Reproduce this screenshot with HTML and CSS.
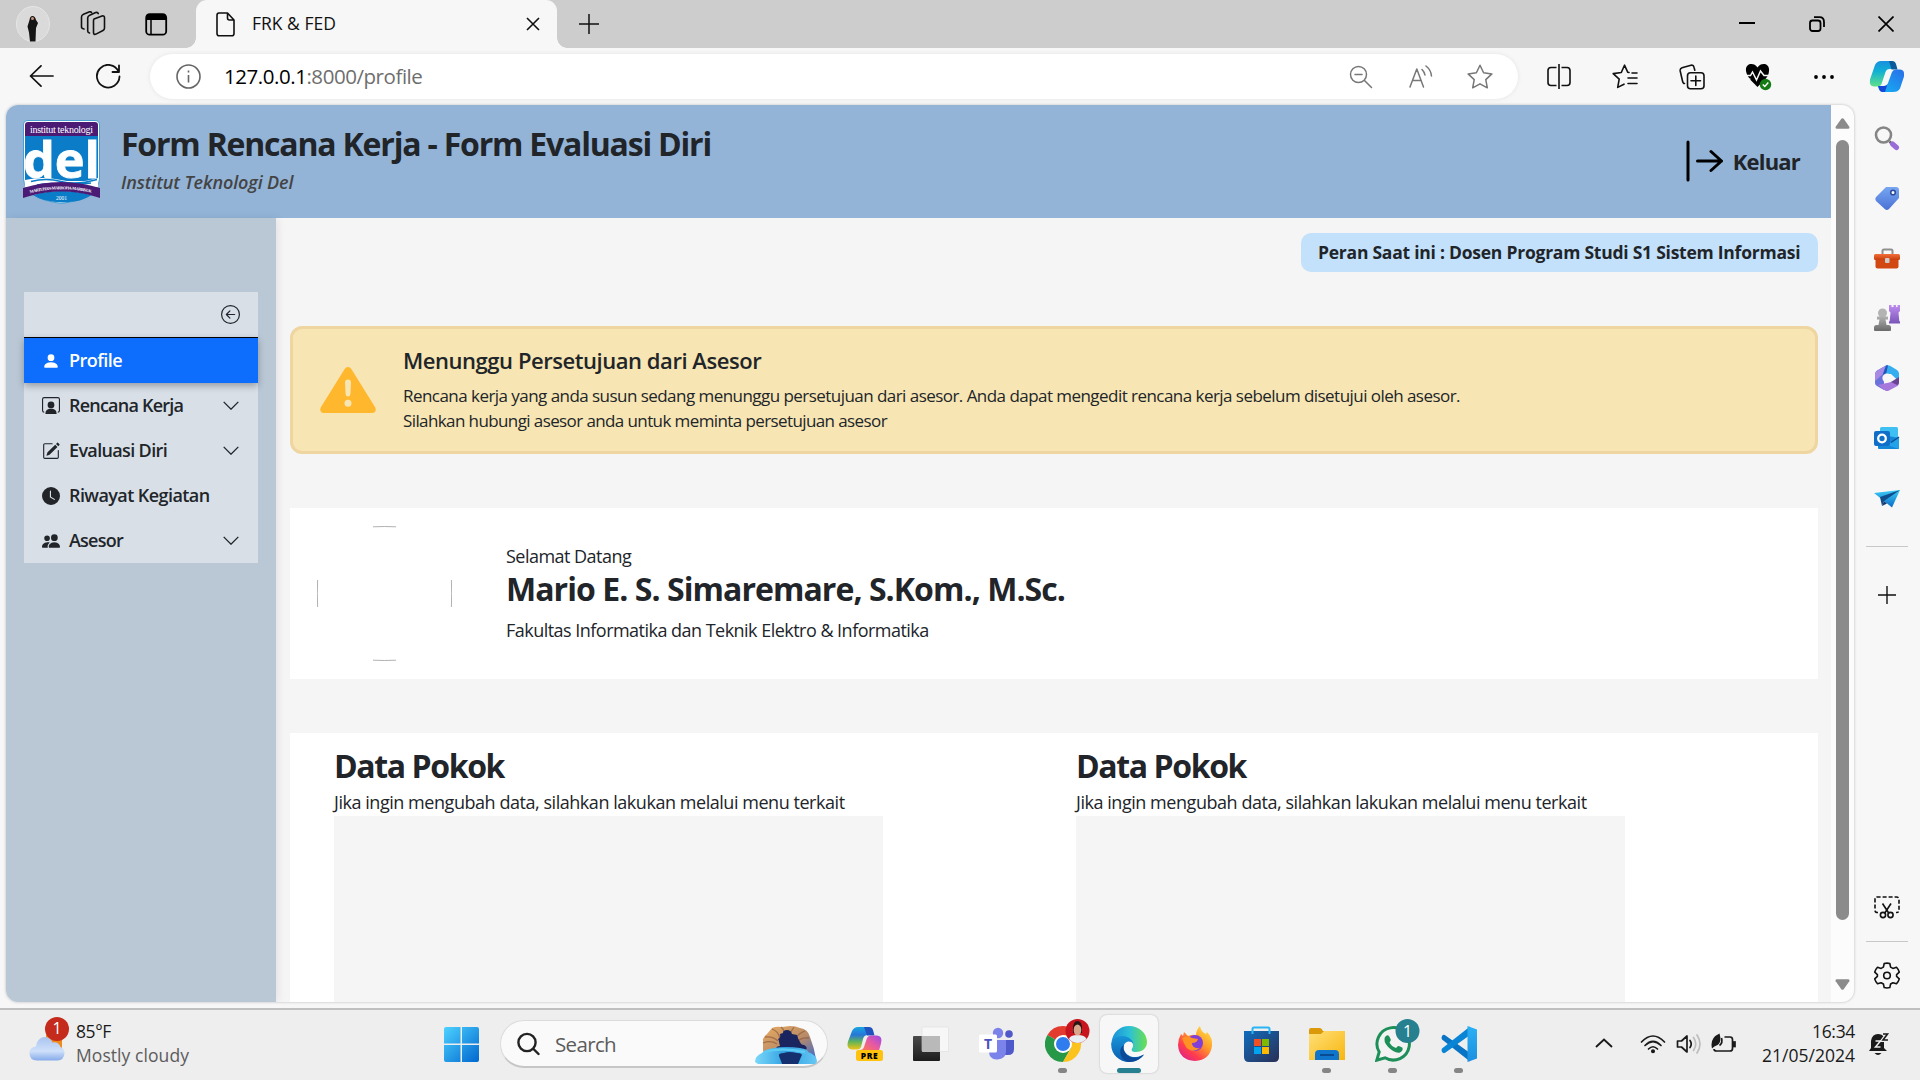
FILE: index.html
```html
<!DOCTYPE html>
<html lang="id">
<head>
<meta charset="utf-8">
<title>FRK &amp; FED</title>
<link rel="stylesheet" href="styles.css">
</head>
<body>
<svg class="defs" width="0" height="0" aria-hidden="true">
  <defs>
    <linearGradient id="gWin" x1="0" y1="0" x2="1" y2="1"><stop offset="0" stop-color="#4dd2ff"/><stop offset="1" stop-color="#0067cf"/></linearGradient>
    <linearGradient id="gCopA" x1="0" y1="0" x2="0" y2="1"><stop offset="0" stop-color="#1a8fe0"/><stop offset=".4" stop-color="#10b0d4"/><stop offset="1" stop-color="#5fe08a"/></linearGradient>
    <linearGradient id="gCopB" x1="0" y1="1" x2="1" y2="0"><stop offset="0" stop-color="#12b5f5"/><stop offset="1" stop-color="#2a6ee8"/></linearGradient>
    <linearGradient id="gPreA" x1="0" y1="0" x2="0" y2="1"><stop offset="0" stop-color="#19a5e0"/><stop offset=".35" stop-color="#2776d8"/><stop offset=".65" stop-color="#5fb35c"/><stop offset="1" stop-color="#f0c514"/></linearGradient>
    <linearGradient id="gPreB" x1="1" y1="0" x2="0" y2="1"><stop offset="0" stop-color="#9a4be8"/><stop offset=".5" stop-color="#e85aa0"/><stop offset="1" stop-color="#ff7a45"/></linearGradient>
    <linearGradient id="gTag" x1="0" y1="0" x2="0" y2="1"><stop offset="0" stop-color="#78a6f0"/><stop offset="1" stop-color="#4a72d6"/></linearGradient>
    <linearGradient id="gPurple" x1="0" y1="0" x2="0" y2="1"><stop offset="0" stop-color="#bf8df0"/><stop offset="1" stop-color="#7a55b8"/></linearGradient>
    <linearGradient id="gGray" x1="0" y1="0" x2="0" y2="1"><stop offset="0" stop-color="#b0b0b0"/><stop offset="1" stop-color="#6a6a6a"/></linearGradient>
    <linearGradient id="gBox" x1="0" y1="0" x2="0" y2="1"><stop offset="0" stop-color="#f0703a"/><stop offset="1" stop-color="#c83c0c"/></linearGradient>
    <linearGradient id="gPlane" x1="0" y1="0" x2="0" y2="1"><stop offset="0" stop-color="#3ccbf5"/><stop offset="1" stop-color="#0a6cc8"/></linearGradient>
    <linearGradient id="gEdgeTop" x1="0" y1="0" x2="1" y2="0"><stop offset="0" stop-color="#1a8fd8"/><stop offset=".5" stop-color="#2cc0d8"/><stop offset="1" stop-color="#6be04e"/></linearGradient>
    <linearGradient id="gEdgeLow" x1="0" y1="0" x2="0" y2="1"><stop offset="0" stop-color="#1794d8"/><stop offset="1" stop-color="#0c5cb0"/></linearGradient>
    <linearGradient id="gFox" x1="1" y1="0" x2=".2" y2="1"><stop offset="0" stop-color="#fff04a"/><stop offset=".45" stop-color="#ff9a2a"/><stop offset=".75" stop-color="#ff3d4d"/><stop offset="1" stop-color="#e0208c"/></linearGradient>
    <linearGradient id="gStore" x1="0" y1="0" x2="1" y2="1"><stop offset="0" stop-color="#0f6cbd"/><stop offset="1" stop-color="#2a2f55"/></linearGradient>
    <linearGradient id="gFolder" x1="0" y1="0" x2="1" y2="1"><stop offset="0" stop-color="#ffe07a"/><stop offset="1" stop-color="#f8b60e"/></linearGradient>
    <linearGradient id="gCloud" x1="0" y1="0" x2="0" y2="1"><stop offset="0" stop-color="#a9c4f0"/><stop offset=".6" stop-color="#cfe0fa"/><stop offset="1" stop-color="#86abea"/></linearGradient>
    <linearGradient id="gCode" x1="0" y1="0" x2="0" y2="1"><stop offset="0" stop-color="#2bb0f4"/><stop offset="1" stop-color="#1a8fe0"/></linearGradient>
    <linearGradient id="gDark" x1="0" y1="0" x2="0" y2="1"><stop offset="0" stop-color="#4a4a4a"/><stop offset="1" stop-color="#1c1c1c"/></linearGradient>
    <linearGradient id="gRock" x1="0" y1="0" x2="1" y2="1"><stop offset="0" stop-color="#e8ac60"/><stop offset=".55" stop-color="#b98a68"/><stop offset="1" stop-color="#3a6bd0"/></linearGradient>
    <linearGradient id="gSea" x1="0" y1="0" x2="1" y2="0"><stop offset="0" stop-color="#7ad8fa"/><stop offset=".5" stop-color="#2f9fe0"/><stop offset="1" stop-color="#66c8f5"/></linearGradient>
  </defs>
</svg>

<div class="tabbar">
  <div class="tabbar-tools">
    <svg width="34" height="36" viewBox="0 0 34 36"><ellipse cx="17" cy="18" rx="16.500" ry="17.500" fill="#dadada" stroke="#e6e6e6"/><path d="M13.500 14q.5-4 3-4t3.500 4l2 3-2 5-.5 13.500h-5.500l-1-9-1.500-6z" fill="#141414"/><circle cx="16.500" cy="12.500" r="1.500" fill="#c49478"/></svg>
    <svg width="26" height="26" viewBox="0 0 26 26" fill="none" stroke="#111" stroke-width="1.600" stroke-linejoin="round" stroke-linecap="round"><path d="M14 8l8-3q2.500-.5 2.500 1.800V17q0 1.800-1.500 2.500l-7 3.600q-2.500 1-2.500-1.500V10q0-1.500.5-2z"/><path d="M9.500 22q-1.800-.5-1.800-2V7q0-2 2-2.800l6-2.600q2-.6 2.500 1M4 18q-2.500-.5-2.500-2V6q0-2 2-2.800L9 .9q1.500-.5 2.500.5"/></svg>
    <svg width="23" height="23" viewBox="0 0 23 23"><rect x="1.200" y="1.200" width="20" height="20.500" rx="3.500" fill="none" stroke="#000" stroke-width="1.800"/><path d="M1 7V4q0-3 3-3h14q3 0 3 3v3z"/><path d="M6 7v14" stroke="#000" stroke-width="1.500"/></svg>
  </div>
  <div class="tab">
    <svg width="19" height="25" viewBox="0 0 19 25" fill="none" stroke="#111" stroke-width="1.600" stroke-linejoin="round"><path d="M3 1h8.500L18 8v13.500q0 2.300-2.200 2.300H3.200Q1 23.800 1 21.500V3.300Q1 1 3 1zM11.500 1v5q0 2 2 2H18"/></svg>
    <span class="tab-title">FRK &amp; FED</span>
    <svg class="tab-close" width="14" height="14" viewBox="0 0 14 14" stroke="#111" stroke-width="1.600"><path d="M1 1l12 12M13 1L1 13"/></svg>
  </div>
  <svg class="new-tab" width="22" height="22" viewBox="0 0 22 22" stroke="#111" stroke-width="1.500"><path d="M11 1v20M1 11h20"/></svg>
  <div class="window-controls">
    <svg width="16" height="16" viewBox="0 0 16 16" stroke="#000" stroke-width="2"><path d="M0 7h16"/></svg>
    <svg width="16" height="16" viewBox="0 0 16 16" fill="none" stroke="#000" stroke-width="1.800"><rect x="1" y="4.500" width="10.500" height="10.500" rx="2.500"/><path d="M5 1.200h5.500Q15 1.200 15 6v5"/></svg>
    <svg width="16" height="16" viewBox="0 0 16 16" stroke="#000" stroke-width="1.700"><path d="M.5.500l15 15M15.500.500l-15 15"/></svg>
  </div>
</div>

<div class="toolbar">
  <div class="nav-buttons">
    <svg width="25" height="24" viewBox="0 0 25 24" fill="none" stroke="#111" stroke-width="1.700" stroke-linecap="round" stroke-linejoin="round"><path d="M24 11H1.500M12 .8L1.500 11 12 21.200"/></svg>
    <svg width="26" height="26" viewBox="0 0 26 26" fill="none" stroke="#111" stroke-width="1.800" stroke-linecap="round" stroke-linejoin="round"><path d="M23.500 7.500A11.300 11.300 0 1 0 24.500 12.500M24 1.500V8h-6.500"/></svg>
  </div>
  <div class="address">
    <svg width="25" height="25" viewBox="0 0 25 25" fill="none" stroke="#666" stroke-width="1.600"><circle cx="12.500" cy="12.500" r="11.500"/><path d="M12.500 11v7.500M12.500 6.500v2"/></svg>
    <span class="url"><b>127.0.0.1</b>:8000/profile</span>
    <div class="address-icons">
      <svg width="24" height="24" viewBox="0 0 24 24" fill="none" stroke="#777" stroke-width="1.500" stroke-linecap="round"><circle cx="9.500" cy="9.500" r="8"/><path d="M15.500 15.500L22.500 22.500M6 9.500h7"/></svg>
      <svg width="25" height="24" viewBox="0 0 25 24" fill="none" stroke="#777" stroke-width="1.500" stroke-linecap="round" stroke-linejoin="round"><path d="M2 22L8.800 4 15.500 22M4.500 15.500h8.700M14 4.500q2.500 2.500 3 5.500M18 1q5 4 5.500 10"/></svg>
      <svg width="26" height="25" viewBox="0 0 26 25" fill="none" stroke="#777" stroke-width="1.500" stroke-linejoin="round"><path d="M13 1.200l3.600 7.600 8.300 1.100-6.100 5.700 1.500 8.200-7.300-4-7.300 4 1.500-8.200L1.100 9.900l8.300-1.100z"/></svg>
    </div>
  </div>
  <div class="toolbar-icons">
    <svg width="24" height="25" viewBox="0 0 24 25" fill="none" stroke="#111" stroke-width="1.600"><path d="M9.500 3.500H4q-3 0-3 3v12q0 3 3 3h5.500M14.500 3.500H20q3 0 3 3v12q0 3-3 3h-5.500M12 0v25"/></svg>
    <svg width="26" height="25" viewBox="0 0 26 25" fill="none" stroke="#111" stroke-width="1.600" stroke-linejoin="round" stroke-linecap="round"><path d="M17 8.500l-1.200-.2L12.500 1.200 9.300 8.500 1.200 9.600l6 5.600-1.500 8.200 6.300-3.200M20 9h5M16 14h9M16 19.500h9"/></svg>
    <svg width="26" height="26" viewBox="0 0 26 26" fill="none" stroke="#111" stroke-width="1.600" stroke-linejoin="round" stroke-linecap="round"><path d="M5.500 19.500Q4 19.500 3.500 17L1.200 7Q.8 4.500 3 3.800L12 1.200q2.500-.5 3 2l.8 3"/><rect x="8.500" y="8.800" width="16.500" height="16" rx="3"/><path d="M16.800 12v9.500M12 16.800h9.500"/></svg>
    <svg width="27" height="28" viewBox="0 0 27 28"><path d="M12.500 4.500C9-1 0 0 1 8c1 7 8 12 11.500 16C16 20 24 15 24 8 25 0 16-1 12.500 4.500z"/><path d="M0 12.500h5.500l2-3.500 4 8 4-9 3.500 4.500h7" fill="none" stroke="#f7f7f7" stroke-width="1.500"/><path d="M0 16h5.500" stroke="#f7f7f7" stroke-width="1"/><circle cx="20.500" cy="21.500" r="5.700" fill="#147a14"/><path d="M17.800 21.500l2 2 3.500-4" fill="none" stroke="#fff" stroke-width="1.400"/></svg>
    <svg width="22" height="6" viewBox="0 0 22 6"><circle cx="3" cy="3" r="1.900"/><circle cx="11" cy="3" r="1.900"/><circle cx="19" cy="3" r="1.900"/></svg>
    <svg width="36" height="33" viewBox="0 0 36 33"><path d="M12 1h10q3 0 4 3l1.500 5h-7q-3 0-4 3l-4 12q-1 2.500-4 2.500H5q-5 0-4-7L6 5q2-4 6-4z" fill="url(#gCopA)"/><path d="M20 1h3q3 0 4 3l1.500 5.500h-6z" fill="#0b5b9c"/><path d="M24 32H14q-3 0-4-3l-1-3h6q3 0 4-3l4-11q1-2.500 4-2.500h4q5 0 4 7l-4 12q-2 3.500-7 3.500z" fill="url(#gCopB)"/><path d="M9 26h6q3 0 3.500-2L16 32h-2q-3 0-4-3z" fill="#1548d6"/></svg>
  </div>
</div>

<div class="body-row">
  <div class="viewport">
    <div class="page">
      <header class="app-header">
        <svg class="logo" width="78" height="84" viewBox="0 0 78 84">
          <path d="M5 .5h67q4.500 0 4.500 4.500v54q-2 20-38 24.500Q2 79 .5 59V5Q.5.500 5 .5z" fill="#fff" stroke="#4a9fd0"/>
          <path d="M2 16h73v45H2z" fill="#0a7cc8"/>
          <path d="M5 2h67q3 0 3 3v11H2V5q0-3 3-3z" fill="#4a1a75"/>
          <text x="38.500" y="12.500" text-anchor="middle" textLength="63" font-family="Liberation Serif, serif" font-size="10" fill="#fff">institut teknologi</text>
          <text x="0" y="57.500" textLength="77" lengthAdjust="spacingAndGlyphs" font-family="Open Sans, sans-serif" font-weight="700" font-size="51" fill="#fff" stroke="#fff" stroke-width=".8">del</text>
          <path d="M2 60q18-4 36 0t37-2v9H2z" fill="#fff"/><path d="M8 61.500q15-4 30 0t36-2M14 65q12-2.500 24-1t30-1" fill="none" stroke="#0a7cc8" stroke-width="1.500"/>
          <path d="M10 75q28-8 58 0-8 7-29 7.500Q20 82 10 75z" fill="#0a7cc8"/>
          <path d="M0 68q38-12 77 0v10l-5-1.500q-33.500-10-67 0L0 78z" fill="#4a1a75"/>
          <path id="ribbon" d="M7 73.200q31.500-8 63 0" fill="none"/>
          <text font-family="Liberation Serif, serif" font-weight="700" font-size="4.200" fill="#fff"><textPath href="#ribbon" textLength="62">MARTUHAN-MARROHA-MARBISUK</textPath></text>
          <text x="38.500" y="79.500" text-anchor="middle" font-family="Liberation Serif, serif" font-size="5.500" fill="#fff">2001</text>
        </svg>
        <div class="brand">
          <h1>Form Rencana Kerja - Form Evaluasi Diri</h1>
          <p>Institut Teknologi Del</p>
        </div>
        <a class="logout">
          <svg width="37" height="42" viewBox="0 0 37 42" fill="none" stroke="#000" stroke-width="3" stroke-linecap="round" stroke-linejoin="round"><path d="M2 2v38M11.500 21h24M25 11.500L35.500 21 25 30.500"/></svg>
          <span>Keluar</span>
        </a>
      </header>
      <div class="columns">
        <aside class="side">
          <nav class="menu">
            <div class="menu-top"><svg width="19" height="19" viewBox="0 0 16 16" fill="#212529"><path fill-rule="evenodd" d="M1 8a7 7 0 1 0 14 0A7 7 0 0 0 1 8m15 0A8 8 0 1 1 0 8a8 8 0 0 1 16 0m-4.500-.5a.5.5 0 0 1 0 1H5.707l2.147 2.146a.5.5 0 0 1-.708.708l-3-3a.5.5 0 0 1 0-.708l3-3a.5.5 0 1 1 .708.708L5.707 7.500z"/></svg></div>
            <a class="item active"><svg class="ico" viewBox="0 0 16 16"><path d="M3 14s-1 0-1-1 1-4 6-4 6 3 6 4-1 1-1 1zm5-6a3 3 0 1 0 0-6 3 3 0 0 0 0 6"/></svg><span>Profile</span></a>
            <a class="item"><svg class="ico" viewBox="0 0 16 16"><path d="M11 7a3 3 0 1 1-6 0 3 3 0 0 1 6 0"/><path fill-rule="evenodd" d="M2 0a2 2 0 0 0-2 2v10a2 2 0 0 0 2 2V13a1 1 0 0 1-1-1V2a1 1 0 0 1 1-1h12a1 1 0 0 1 1 1v10a1 1 0 0 1-1 1v1a2 2 0 0 0 2-2V2a2 2 0 0 0-2-2z"/><path d="M3 15q0-4.500 5-4.500t5 4.500z"/></svg><span>Rencana Kerja</span><svg class="chev" viewBox="0 0 16 9"><path d="M.7.900L8 8.200 15.300.900"/></svg></a>
            <a class="item evaluasi"><svg class="ico" viewBox="0 0 16 16"><path d="M15.502 1.940a.5.5 0 0 1 0 .706L14.459 3.690l-2-2L13.502.646a.5.5 0 0 1 .707 0zm-1.750 2.456-2-2-6.813 6.813a.5.5 0 0 0-.121.196l-.805 2.414a.25.25 0 0 0 .316.316l2.414-.805a.5.5 0 0 0 .196-.12z"/><path fill-rule="evenodd" d="M1 13.500A1.500 1.500 0 0 0 2.500 15h11a1.500 1.500 0 0 0 1.500-1.500v-6a.5.5 0 0 0-1 0v6a.5.5 0 0 1-.5.500h-11a.5.5 0 0 1-.5-.5v-11a.5.5 0 0 1 .5-.5H9a.5.5 0 0 0 0-1H2.500A1.500 1.500 0 0 0 1 2.500z"/></svg><span>Evaluasi Diri</span><svg class="chev" viewBox="0 0 16 9"><path d="M.7.900L8 8.200 15.300.900"/></svg></a>
            <a class="item riwayat"><svg class="ico" viewBox="0 0 16 16"><path d="M16 8A8 8 0 1 1 0 8a8 8 0 0 1 16 0M8 3.500a.5.5 0 0 0-1 0V9a.5.5 0 0 0 .252.434l3.500 2a.5.5 0 0 0 .496-.868L8 8.710z"/></svg><span>Riwayat Kegiatan</span></a>
            <a class="item"><svg class="ico" viewBox="0 0 16 16"><path d="M7 14s-1 0-1-1 1-4 5-4 5 3 5 4-1 1-1 1zm4-6a3 3 0 1 0 0-6 3 3 0 0 0 0 6m-5.784 6A2.240 2.240 0 0 1 5 13c0-1.355.680-2.750 1.936-3.720A6.300 6.300 0 0 0 5 9c-4 0-5 3-5 4s1 1 1 1zM4.500 8a2.500 2.500 0 1 0 0-5 2.500 2.500 0 0 0 0 5"/></svg><span>Asesor</span><svg class="chev" viewBox="0 0 16 9"><path d="M.7.900L8 8.200 15.300.900"/></svg></a>
          </nav>
        </aside>
        <main class="content">
          <div class="role"><span>Peran Saat ini : Dosen Program Studi S1 Sistem Informasi</span></div>
          <section class="alert">
            <svg width="56" height="46" viewBox="0 0 56 46"><path d="M28 0q2.200 0 3.500 2.200L55.300 40.500Q57 45.500 52 46H4q-5-.5-3.300-5.500L24.500 2.200Q25.800 0 28 0z" fill="#ffb82e"/><path d="M25 15.500q0-3 3-3t3 3l-.6 11.500q-.2 2.600-2.400 2.600T25.600 27z" fill="#f7e5b3"/><circle cx="28" cy="36.300" r="3.500" fill="#f7e5b3"/></svg>
            <div class="alert-text">
              <h2>Menunggu Persetujuan dari Asesor</h2>
              <p>Rencana kerja yang anda susun sedang menunggu persetujuan dari asesor. Anda dapat mengedit rencana kerja sebelum disetujui oleh asesor.</p>
              <p class="last">Silahkan hubungi asesor anda untuk meminta persetujuan asesor</p>
            </div>
          </section>
          <section class="welcome">
            <svg class="photo" width="135" height="135" viewBox="0 0 135 135" stroke="#a8a8a8"><path d="M56 .8q11.500-.6 23 0M56 134.200q11.500.6 23 0M.6 54q-.5 13.500 0 27M134.400 54q.5 13.500 0 27" fill="none" stroke-width=".9"/></svg>
            <div class="welcome-text">
              <p>Selamat Datang</p>
              <h2>Mario E. S. Simaremare, S.Kom., M.Sc.</h2>
              <p>Fakultas Informatika dan Teknik Elektro &amp; Informatika</p>
            </div>
          </section>
          <section class="data">
            <div class="data-col"><h2>Data Pokok</h2><p>Jika ingin mengubah data, silahkan lakukan melalui menu terkait</p><div class="data-box"></div></div>
            <div class="data-col"><h2>Data Pokok</h2><p>Jika ingin mengubah data, silahkan lakukan melalui menu terkait</p><div class="data-box"></div></div>
          </section>
        </main>
      </div>
    </div>
    <div class="scrollbar">
      <svg width="15" height="11" viewBox="0 0 15 11"><path d="M6.300.8q1.200-1.300 2.400 0l5.600 8q.6 2-1.300 2H2Q.1 10.800.7 8.800z" fill="#8b8b8b"/></svg>
      <div class="thumb"></div>
      <svg class="down" width="15" height="11" viewBox="0 0 15 11"><path d="M6.300 10.200q1.200 1.300 2.400 0l5.600-8q.6-2-1.300-2H2Q.1.200.7 2.200z" fill="#8b8b8b"/></svg>
    </div>
  </div>
  <div class="edgebar">
    <div class="edge-apps">
      <svg width="26" height="26" viewBox="0 0 26 26"><circle cx="9.500" cy="10" r="7.500" fill="none" stroke="#858585" stroke-width="2.600"/><path d="M15.500 16.500l2 2" stroke="#666" stroke-width="2.500"/><path d="M18.500 19l4 3.500" stroke="#9a6cd8" stroke-width="5" stroke-linecap="round"/></svg>
      <svg width="26" height="26" viewBox="0 0 26 26"><path d="M12 2h10q3 0 3 3v8L15 24q-2.200 2-4.200 0L2 16q-1.500-2 0-4z" fill="url(#gTag)"/><circle cx="19" cy="7.500" r="2.300" fill="#fff" stroke="#2c4c9c" stroke-width="1.600"/></svg>
      <svg width="26" height="26" viewBox="0 0 26 26"><path d="M8.500 9V6q0-1.500 1.500-1.500h7Q18.500 4.500 18.500 6v3" fill="none" stroke="#8f8f8f" stroke-width="2"/><rect x="1.500" y="12" width="23" height="11.500" rx="2" fill="#d14812"/><rect x="0" y="9" width="26" height="6" rx="1.500" fill="url(#gBox)"/><rect x="11" y="13" width="4.500" height="5" rx="1" fill="#ccc"/></svg>
      <svg width="26" height="26" viewBox="0 0 26 26"><circle cx="8.500" cy="8" r="4.500" fill="#b3b3b3"/><path d="M3 11.500h11v3h-2.500l1 5.500h2q2.500 0 2.500 2.500V25q0 1-1 1H1q-1 0-1-1v-2.500Q0 20 2.500 20h2l1-5.500H3z" fill="url(#gGray)"/><path d="M15 0h2.500v2h2V0H22v2h1.500V0H26v6l-1.500 1.500.8 8.500q1 .2.700 2.500H15q-.3-2.300.7-2.500l.8-8.500L15 6z" fill="url(#gPurple)"/></svg>
      <svg width="24" height="26" viewBox="0 0 24 26"><path d="M11 .6L2 5.500Q0 7 0 9v9q0 2 2 3l7 4V9z" fill="#6a72dc"/><path d="M11 .6Q3 5 0 8v8l8-7z" fill="#a88ae4"/><path d="M8 9l3-8.400q2-.8 4 .2l7 4.200q2 1.500 2 3.500v8L16 9z" fill="#35aef0"/><path d="M8 9l3-8.400q1-.5 2-.3L9.500 17z" fill="#2356b8"/><path d="M3 20l13-3 8-3v4q0 2-1.500 3L14 25.500q-2 1-4 0z" fill="#a678dc"/><path d="M16 17l8-5v6q-1 2-2 2z" fill="#6a4494"/><circle cx="12" cy="13" r="4.600" fill="#f7f7f7"/></svg>
      <svg width="26" height="24" viewBox="0 0 26 24"><rect x="6" y="1" width="18" height="14" rx="1.500" fill="#3fc0f2"/><path d="M4 8l21 4v10q0 1-1 1H5q-1 0-1-1z" fill="#1486d8"/><path d="M25 11L13 19l12 4z" fill="#22a2e8"/><path d="M25 11l-8 5.500" stroke="#0c4f94" stroke-width="1.500"/><rect x="0" y="5" width="16" height="15" rx="2" fill="#0f6fc8"/><circle cx="8" cy="12.500" r="3.800" fill="none" stroke="#fff" stroke-width="2.300"/></svg>
      <svg width="26" height="20" viewBox="0 0 26 20"><path d="M0 4L26 1 18 18.500 10 12z" fill="url(#gPlane)"/><path d="M6 8l20-7-16 11-2 5z" fill="#0f4c8c"/><path d="M8 17l2-5 3 2.500z" fill="#123a70"/></svg>
      <hr>
      <svg width="18" height="18" viewBox="0 0 18 18" stroke="#111" stroke-width="1.400"><path d="M9 0v18M0 9h18"/></svg>
    </div>
    <div class="edge-tools">
      <svg width="26" height="24" viewBox="0 0 26 24" fill="none" stroke="#111" stroke-width="1.600"><path d="M4 17.500H3.500Q1 17.500 1 15V4.500Q1 2 3.500 2h19Q25 2 25 4.500V15q0 2.500-2.500 2.500H22" stroke-dasharray="4 2"/><path d="M8.500 8.500l6.500 10M17 8.500l-6.500 10"/><circle cx="9" cy="20" r="2.600"/><circle cx="16.500" cy="20" r="2.600"/></svg>
      <hr>
      <svg width="26" height="27" viewBox="0 0 26 27" fill="none" stroke="#111" stroke-width="1.600" stroke-linejoin="round"><path d="M10.200 1.500Q13 .7 15.800 1.500l.8 3.600 2.300 1.300 3.600-1.100q2 2.100 2.800 4.900l-2.700 2.500v1.700l2.700 2.500q-.8 2.800-2.800 4.900l-3.600-1.100-2.300 1.300-.8 3.600q-2.800.8-5.600 0l-.8-3.600-2.300-1.300-3.600 1.100Q1.500 19.700.7 16.900l2.700-2.500v-1.700L.7 10.200q.8-2.800 2.800-4.900l3.600 1.100 2.300-1.300z"/><circle cx="13" cy="13.500" r="3.300"/></svg>
    </div>
  </div>
</div>

<div class="taskbar">
  <div class="weather">
    <div class="weather-icon">
      <svg width="36" height="26" viewBox="0 0 36 26"><path d="M17 0h16v16H17z" fill="#f08a1c"/><path d="M8 25.500Q.5 25 .5 18.500T7 11.500Q8 3 15 2q6-.5 8.500 5.500 6-1 8 4.500 4 1.500 4 6.500-.5 6.500-7 7z" fill="url(#gCloud)"/></svg>
      <span class="count">1</span>
    </div>
    <div class="weather-text"><span class="temp">85°F</span><span class="cond">Mostly cloudy</span></div>
  </div>
  <svg class="start" width="35" height="35" viewBox="0 0 35 35"><path d="M2 0h14.500v16.500H0V2Q0 0 2 0zM18 0h15q2 0 2 2v14.500H18zM0 18h16.500v17H2q-2 0-2-2zM18 18h17v15q0 2-2 2H18z" fill="url(#gWin)"/></svg>
  <div class="search">
    <svg width="23" height="24" viewBox="0 0 23 24" fill="none" stroke="#222" stroke-width="2.400" stroke-linecap="round"><circle cx="10" cy="10.500" r="8.600"/><path d="M16.500 17l5 5"/></svg>
    <span>Search</span>
    <svg class="scene" width="62" height="38" viewBox="0 0 62 38"><path d="M8 24V13q1-3 4-5l5-6q4-2 10-1l8-1q6 0 10 2 8 1 10 9 4 10 6 22H10z" fill="url(#gRock)"/><path d="M8 17q8-3 14 1M10 11q8-1 13 4M17 3q6 2 8 9M26 1q3 2 3 6M50 5q-6 2-9 7M54 12q-8-1-12 4M39 1q-2 3-3 5" stroke="#8d5a3c" stroke-width="1.300" fill="none" opacity=".7"/><path d="M21 23q0-3 4-3l-1-4q0-2-1-3 3-1 2-5l3-1q0-3 4-3t5 4l5 1q1 4 3 7 1 3 4 3 4 2 2 5z" fill="#1a2560"/><path d="M0 36q0-6 7-9 3-4 12-5 12-2 26 0 8 1 8 4 9 3 9 10l-2 2H3z" fill="url(#gSea)"/><path d="M10 26q16-5 40 0" stroke="#5ccbf5" stroke-width="2.500" fill="none"/><path d="M24 30q-1-3 5-3 5-2 13 0 7 0 4 4l-3 7H27l-1-3z" fill="#14306e"/></svg>
  </div>
  <div class="apps">
    <div class="app"><svg width="36" height="36" viewBox="0 0 36 36"><path d="M11 1h9q3 0 4 3l1 5h-4q-4 0-5 4l-2 8q-1 2.500-4 2.500H5q-6-.5-4-8L5 5q2-4 6-4z" fill="url(#gPreA)"/><path d="M17 1h5q3 0 4 3l1.500 5.500H20z" fill="#2052c0"/><path d="M13 24q3 0 4-3l3-9q1-2.500 4-2.500h6q6 .5 4 8l-2 7z" fill="url(#gPreB)"/><rect x="9" y="24" width="27" height="11" rx="2.500" fill="#ffc20e"/><text x="22.500" y="32.600" text-anchor="middle" font-family="Open Sans, sans-serif" font-weight="800" font-size="8.500" letter-spacing=".6">PRE</text></svg></div>
    <div class="app"><svg width="36" height="36" viewBox="0 0 36 36"><rect x="0" y="10" width="27" height="25" rx="1" fill="url(#gDark)"/><rect x="9" y="1" width="26.500" height="24.500" rx="1" fill="#f7f7f7" stroke="#dedede" stroke-width=".6"/><path d="M9 10h18v15.500H9z" fill="#b9b9b9"/></svg></div>
    <div class="app"><svg width="36" height="36" viewBox="0 0 36 36"><circle cx="19" cy="7" r="5.200" fill="#7b83eb"/><circle cx="30" cy="8" r="3.800" fill="#5059c9"/><path d="M26 14h9v9q0 6-6 6h-3z" fill="#5059c9"/><path d="M10 14h17v11q0 8-8.500 8.500T10 25z" fill="#7b83eb"/><rect x="0" y="8.500" width="18" height="18" rx="1.500" fill="#fff"/><text x="9" y="22.500" text-anchor="middle" font-family="Open Sans, sans-serif" font-weight="700" font-size="14" fill="#4b53bc">T</text></svg></div>
    <div class="app run"><svg width="46" height="44" viewBox="0 0 46 44"><g transform="translate(0 8)"><path d="M18 18L2.400 9A18 18 0 0 1 33.600 9z" fill="#e33b2e"/><path d="M18 18L2.400 9A18 18 0 0 0 18 36l8-14z" fill="#279847"/><path d="M18 9h15.600A18 18 0 0 1 18 36l8-14z" fill="#fcc31e"/><circle cx="18" cy="18" r="9" fill="#fff"/><circle cx="18" cy="18" r="7" fill="#2f7cee"/></g><circle cx="32.500" cy="13" r="12" fill="#c8141e"/><path d="M24 21q1-4 8.500-4t9 4q-4 4-9 4t-8.500-4z" fill="#e8eef2"/><path d="M28 11q0-8 4.500-8T37 11v4h-9z" fill="#2a1614"/><ellipse cx="32.500" cy="12" rx="3.800" ry="5.500" fill="#d9a68c"/></svg></div>
    <div class="app run open"><svg width="36" height="36" viewBox="0 0 36 36"><path d="M.5 16C2 6 9 0 18 0c10 0 18 7 18 16 0 7-6 10-11 10-4 0-5-1.500-4-3.500 2-2 1.500-9-5.500-10Q6 11 .5 16z" fill="url(#gEdgeTop)"/><path d="M.2 17Q3 10 11 10q9 0 11.500 8c-3-4-8-3-9.500 1-2 7 5 12.500 12 12 3-.2 6-1.500 8-2.500C30 33 24 36 18 36 8 36-.5 28 .2 17z" fill="url(#gEdgeLow)"/><path d="M13 19q-2 5 2 9 5 5 12 3.500l6-3C29 34 23 36.500 17 35.900 8 33 7 22 13 19z" fill="#0b4a98"/></svg></div>
    <div class="app"><svg width="36" height="36" viewBox="0 0 36 36"><path d="M4 8l2 2 1-4 4 4q5-2 8-1 0-5 4-9 1 6 6 8l1-2q6 6 5 14-2 14-17 15Q2 34 1 19q0-6 3-11z" fill="url(#gFox)"/><circle cx="18" cy="17" r="8" fill="#7f3fd8"/><path d="M5 12q6-3 10 0l6 1q-1 4-6 4 0 6 8 5-8 6-14-1-2-3-4-9z" fill="#ff9224"/></svg></div>
    <div class="app"><svg width="36" height="36" viewBox="0 0 36 36"><path d="M9.500 7V3q0-1.500 1.500-1.500h14q1.500 0 1.500 1.500v4" fill="none" stroke="#29b4f5" stroke-width="2"/><path d="M1 5h35v26q0 5-5 5H6q-5 0-5-5z" fill="url(#gStore)"/><path d="M9.500 5v3M26.500 5v3" stroke="#29b4f5" stroke-width="2"/><path d="M11 13h7v7h-7z" fill="#f25022"/><path d="M19 13h7v7h-7z" fill="#7fba00"/><path d="M11 21h7v7h-7z" fill="#00a4ef"/><path d="M19 21h7v7h-7z" fill="#ffb900"/></svg></div>
    <div class="app run"><svg width="36" height="36" viewBox="0 0 36 36"><path d="M0 4q0-2 2-2h9q1.500 0 3 3h22v8H0z" fill="#dc9a0a"/><path d="M0 8h12l3-3h21v29H0z" fill="url(#gFolder)"/><path d="M6 34v-6q0-4 4-4h16q4 0 4 4v6z" fill="#1076cc"/><path d="M11 29h14" stroke="#0a4a94" stroke-width="2"/></svg></div>
    <div class="app run"><svg width="46" height="44" viewBox="0 0 46 44"><g transform="translate(0 8)"><path d="M1.800 34.200L4.200 26A16.200 16.200 0 1 1 10 31.800z" fill="#f3f3f3" stroke="#1d8f58" stroke-width="3"/><path d="M11 10q1.500-1.500 3 0l1.800 3.500q.3 1-1.300 3 2 4 6.500 5.500l2-2q1-.5 4.500 1.800.8 3-2.500 4.700-3 1.200-9-3-7-5.500-6.500-10.500 0-2 1.500-3z" fill="#1d8f58"/></g><circle cx="32.500" cy="13" r="12" fill="#26808f"/><text x="32.500" y="18.500" text-anchor="middle" font-family="Open Sans, sans-serif" font-size="16" fill="#fff">1</text></svg></div>
    <div class="app run"><svg width="36" height="36" viewBox="0 0 36 36"><path d="M1 10q1.500-2 3.500-.5L29 27v8.500L1 13.500q-1-1.500 0-3.500z" fill="#0a74c4"/><path d="M1 26q1.500 2 3.500.5L29 9V.5L1 22.500q-1 1.500 0 3.500z" fill="#0a84d4"/><path d="M26.500 0L36 3.500v29L26.500 36z" fill="url(#gCode)"/></svg></div>
  </div>
  <div class="tray">
    <svg class="up" width="18" height="10" viewBox="0 0 18 10" fill="none" stroke="#1a1a1a" stroke-width="1.900"><path d="M1 9l8-7.500L17 9"/></svg>
    <svg class="wifi" width="26" height="20" viewBox="0 0 26 20" fill="none" stroke="#1a1a1a" stroke-width="1.700" stroke-linecap="round"><path d="M1.500 8q11.500-12 23 0M5 11.500q8-8 16 0M8.500 15q4.500-4.500 9 0"/><circle cx="13" cy="17.300" r="1.200" fill="#1a1a1a"/></svg>
    <svg class="vol" width="26" height="20" viewBox="0 0 26 20" fill="none" stroke="#1a1a1a" stroke-width="1.700" stroke-linejoin="round" stroke-linecap="round"><path d="M1.500 7h4L11 2v16l-5.500-5h-4zM14 6.500q2.500 3.500 0 7"/><path d="M17.500 3.500q4.500 6.500 0 13M21 1q6 9 0 18" stroke="#bdbdbd"/></svg>
    <svg class="bat" width="26" height="20" viewBox="0 0 26 20" fill="none" stroke="#1a1a1a" stroke-width="1.700"><path d="M13.500 4H19q2.500 0 2.500 2.500v9Q21.500 18 19 18H5.500Q3 18 3 16"/><path d="M22.500 9h1.500v4.500h-1.500z" fill="#1a1a1a"/><path d="M1 15.500Q-1.500 5 8.500.5q2.500 9-2 11.500-3.500 1-5.500 3.500z" fill="#1a1a1a" stroke="none"/><path d="M10.500 5q1.500 5-2 7.500"/></svg>
    <div class="clock"><span class="time">16:34</span><span class="date">21/05/2024</span></div>
    <svg class="bell" width="22" height="25" viewBox="0 0 22 25"><path d="M1 19l2-3V9q1-7 7-7 4 0 6 3v11l3 3zM6.500 21h7q-3.500 4-7 0z" fill="#1a1a1a"/><path d="M7.500 9h5l-5 6h5" fill="none" stroke="#eee" stroke-width="1.500"/><path d="M15 2h4.500L15 8h5" fill="none" stroke="#eee" stroke-width="4"/><path d="M15 2h4.500L15 8h5" fill="none" stroke="#1a1a1a" stroke-width="1.600"/></svg>
  </div>
</div>
</body>
</html>
```
FILE: styles.css
```css
* { box-sizing: border-box; }
body {
  margin: 0;
  width: 1920px;
  height: 1080px;
  overflow: hidden;
  display: flex;
  flex-direction: column;
  background: #f7f7f7;
  color: #212529;
  font-family: "Open Sans", "Noto Sans", sans-serif;
  font-size: 18px;
}
h1, h2, p { margin: 0; white-space: nowrap; }
span { white-space: nowrap; }
svg { display: block; flex: none; }
.defs { position: absolute; }

/* Tab strip */
.tabbar { height: 48px; flex: none; display: flex; align-items: center; background: #cdcdcd; }
.tabbar-tools { width: 196px; display: flex; align-items: center; padding-left: 16px; }
.tabbar-tools svg:nth-child(2) { margin-left: 30px; }
.tabbar-tools svg:nth-child(3) { margin-left: 39px; }
.tab {
  width: 361px; height: 48px; padding: 0 17px 0 20px; display: flex; align-items: center;
  background: #f7f7f7; border-radius: 11px 11px 0 0; position: relative; color: #111;
}
.tab::before, .tab::after { content: ""; position: absolute; bottom: 0; width: 10px; height: 10px; }
.tab::before { left: -10px; background: radial-gradient(circle at 0 0, #cdcdcd 9.5px, #f7f7f7 10px); }
.tab::after { right: -10px; background: radial-gradient(circle at 100% 0, #cdcdcd 9.5px, #f7f7f7 10px); }
.tab-title { margin-left: 17px; font-size: 17.5px; padding-bottom: 2px; }
.tab-close { margin-left: auto; }
.new-tab { margin-left: 21px; }
.window-controls { margin-left: auto; padding-right: 26px; display: flex; gap: 53.5px; }

/* Toolbar */
.toolbar { height: 57px; flex: none; display: flex; align-items: center; }
.nav-buttons { width: 150px; display: flex; align-items: center; padding-left: 29px; gap: 41px; }
.address {
  width: 1368px; height: 45px; border-radius: 23px; padding: 0 25px 0 26px; display: flex; align-items: center;
  background: #fff; box-shadow: 0 0 5px rgba(0, 0, 0, .08);
}
.url { margin-left: 23px; padding-bottom: 2px; font-size: 20.5px; letter-spacing: -.45px; color: #6e6e6e; }
.url b { font-weight: 400; color: #000; }
.address-icons { margin-left: auto; display: flex; align-items: center; gap: 34.5px; }
.toolbar-icons { flex: 1; display: flex; align-items: center; gap: 40.8px; padding-left: 29px; }
.toolbar-icons svg:last-child { margin-left: -7px; }

/* Page viewport */
.body-row { height: 903px; flex: none; display: flex; }
.viewport {
  width: 1848px; height: 897px; margin-left: 6px; display: flex; overflow: hidden;
  border-radius: 12px; background: #fcfcfc; box-shadow: 0 0 3px rgba(0, 0, 0, .25);
}
.page { width: 1825px; background: #f5f5f5; display: flex; flex-direction: column; }
.app-header { height: 113px; flex: none; display: flex; background: #93b4d7; padding: 15px 31px 0 17px; }
.brand { padding: 6px 0 0 20px; }
.brand h1 { font-size: 32px; line-height: 36px; font-weight: 700; letter-spacing: -1.2px; }
.brand p { margin-top: 7px; font-size: 18px; line-height: 27px; font-style: italic; font-weight: 600; letter-spacing: -.1px; color: #444; }
.logout { height: 42px; margin: 20px 0 0 auto; display: flex; align-items: center; gap: 10px; font-size: 22px; font-weight: 700; letter-spacing: -.8px; }
.columns { flex: 1; display: flex; min-height: 0; }
.side { width: 270px; padding: 74px 18px 0; background: #bac8d6; box-shadow: 2px 0 8px rgba(0, 0, 0, .08); }
.menu { background: #d8dfe7; height: 271px; }
.menu-top { height: 45px; display: flex; align-items: center; justify-content: flex-end; padding-right: 18px; }
.item { height: 45px; display: flex; align-items: center; padding: 0 19px 0 18px; font-weight: 600; letter-spacing: -.78px; }
.item span { margin-left: 9px; padding-bottom: 2px; }
.item.active { height: 46px; letter-spacing: -.536px; background: #0d6efd; color: #fff; border-top: 1px solid #000; box-shadow: 0 3px 7px rgba(0, 0, 0, .3); position: relative; }
.item.evaluasi { letter-spacing: -.65px; }
.item.riwayat { letter-spacing: -.58px; }
.ico { width: 18px; height: 18px; fill: currentColor; }
.chev { width: 16px; height: 9px; margin-left: auto; fill: none; stroke: #212529; stroke-width: 1.3; }
.content { flex: 1; padding: 15px 13px 0 14px; display: flex; flex-direction: column; }
.role {
  width: 517px; height: 39px; align-self: flex-end; padding: 0 0 1px 17px; display: flex; align-items: center;
  background: #c4e1fb; border-radius: 10px; font-size: 17.5px; font-weight: 700; letter-spacing: -.24px;
}
.alert {
  height: 128px; margin-top: 54px; padding-left: 27px; display: flex; align-items: center;
  background: #f7e5b3; border: 3px solid #efd5a0; border-radius: 12px;
}
.alert-text { margin: -1px 0 0 27px; }
.alert h2 { font-size: 22px; line-height: 28px; font-weight: 600; letter-spacing: -.45px; margin-bottom: 9px; }
.alert p { font-size: 17px; line-height: 25px; letter-spacing: -.543px; }
.alert .last { letter-spacing: -.602px; }
.welcome { height: 171px; margin-top: 54px; padding: 18px 0 0 27px; display: flex; background: #fff; }
.welcome-text { padding: 17px 0 0 54px; }
.welcome p { line-height: 27px; letter-spacing: -.525px; }
.welcome h2 { font-size: 32px; line-height: 38px; font-weight: 700; letter-spacing: -.942px; margin-bottom: 9px; }
.data { height: 269px; margin-top: 54px; padding: 14px 0 0 44px; display: flex; gap: 193px; background: #fff; }
.data-col { width: 549px; display: flex; flex-direction: column; }
.data h2 { font-size: 32px; line-height: 38px; font-weight: 700; letter-spacing: -1.395px; margin-bottom: 4px; }
.data p { line-height: 27px; letter-spacing: -.455px; }
.data-box { flex: 1; background: #f5f5f5; }
.scrollbar { width: 23px; padding: 13px 0 12px; display: flex; flex-direction: column; align-items: center; }
.thumb { width: 13px; height: 780px; margin-top: 11px; border-radius: 7px; background: #8b8b8b; }
.down { margin-top: auto; }

/* Browser side panel */
.edgebar { flex: 1; display: flex; flex-direction: column; justify-content: space-between; padding: 19.5px 0 19px; }
.edge-apps, .edge-tools { display: flex; flex-direction: column; align-items: center; }
.edge-apps svg { margin-bottom: 34.2px; }
.edge-apps svg:nth-of-type(5) { margin-bottom: 35.2px; }
.edge-apps svg:nth-of-type(6) { margin-bottom: 38.2px; }
.edge-apps svg:nth-of-type(7) { margin-bottom: 37px; }
.edge-apps svg:last-child { margin: 39.5px 0 0; }
.edgebar hr { width: 42px; height: 1px; margin: 0; border: 0; background: #c8c8c8; }
.edge-tools hr { margin: 22px 0 20px; }

/* Taskbar */
.taskbar { height: 72px; border-top: 2px solid #bfbfbf; background: #eee; display: flex; color: #1a1a1a; }
.weather { width: 444px; display: flex; padding-left: 29px; }
.weather-icon { position: relative; width: 36px; padding-top: 25px; }
.count {
  position: absolute; left: 16px; top: 7px; width: 24px; height: 24px; border-radius: 50%;
  background: #c42b1c; color: #fff; font-size: 16px; line-height: 23px; text-align: center;
}
.weather-text { padding: 9px 0 0 11px; display: flex; flex-direction: column; line-height: 24px; font-size: 17.5px; }
.temp { letter-spacing: -.387px; }
.cond { color: #5c5c5c; letter-spacing: .069px; }
.start { margin-top: 17px; }
.search {
  width: 328px; height: 48px; margin: 10px 0 0 21px; padding: 0 10px 0 16px; display: flex; align-items: center;
  background: #fafafa; border: 1px solid #dcdcdc; border-bottom: 2px solid #c6c6c6; border-radius: 24px;
}
.search span { margin-left: 15px; font-size: 20.5px; letter-spacing: -.654px; color: #5c5c5c; }
.scene { margin: 2px 0 0 auto; }
.apps { display: flex; margin-left: 8px; padding-top: 5px; gap: 8px; }
.app { width: 58px; height: 58px; display: flex; align-items: center; justify-content: center; position: relative; border-radius: 7px; }
.app svg[width="46"] { margin: -8px -10px 0 0; }
.open { background: #f7f7f7; box-shadow: 0 0 2px rgba(0, 0, 0, .25); }
.run::after { content: ""; position: absolute; left: 24px; bottom: 0; width: 9px; height: 5px; border-radius: 3px; background: #858585; }
.open::after { left: 17px; width: 24px; background: #26808f; }
.tray { margin-left: auto; display: flex; align-items: flex-start; padding-right: 30px; }
.up { margin: 28px 27px 0 0; }
.wifi { margin: 24px 10px 0 0; }
.vol { margin: 24px 9px 0 0; }
.bat { margin: 23px 0 0; }
.clock { width: 118px; padding-top: 9px; display: flex; flex-direction: column; align-items: flex-end; line-height: 24px; font-size: 17.5px; }
.time { letter-spacing: -.325px; }
.bell { margin: 22px 0 0 13px; }
```
